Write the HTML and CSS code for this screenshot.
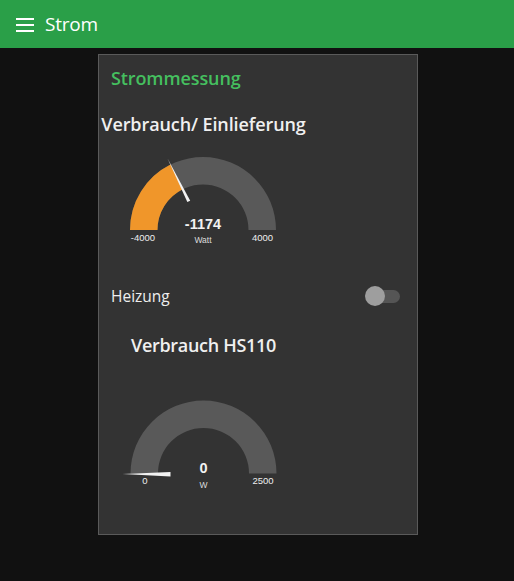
FILE: index.html
```html
<!DOCTYPE html>
<html lang="de">
<head>
<meta charset="utf-8">
<title>Strom</title>
<link rel="stylesheet" href="styles.css">
</head>
<body>
<header class="toolbar">
  <svg class="menu-icon" width="18" height="14" viewBox="0 0 18 14" aria-hidden="true">
    <rect x="0" y="0" width="18" height="2" fill="#fff"/>
    <rect x="0" y="6" width="18" height="2" fill="#fff"/>
    <rect x="0" y="12" width="18" height="2" fill="#fff"/>
  </svg>
  <span class="toolbar-title">Strom</span>
</header>
<main class="content">
  <section class="card">
    <div class="group-title">Strommessung</div>

    <div class="gauge gauge-one">
      <div class="gauge-title">Verbrauch/ Einlieferung</div>
      <svg class="gauge-svg" width="209" height="105" viewBox="0 0 209 105">
        <path d="M31,83 A73,73 0 0 1 177,83 L149.5,83 A45.5,45.5 0 0 0 58.5,83 Z" fill="#595959"/>
        <path d="M31,83 A73,73 0 0 1 71.54,17.61 L83.77,42.25 A45.5,45.5 0 0 0 58.5,83 Z" fill="#f0962a"/>
        <polygon points="68.43,11.34 91.2,53.63 88.34,55.05" fill="#f2f2f2"/>
        <text class="g-value" x="104" y="82">-1174</text>
        <text class="g-unit" x="104" y="96">Watt</text>
        <text class="g-limit" x="44" y="94">-4000</text>
        <text class="g-limit" x="163.5" y="94">4000</text>
      </svg>
    </div>

    <div class="switch-row">
      <span class="switch-label">Heizung</span>
      <span class="switch">
        <span class="switch-track"></span>
        <span class="switch-knob"></span>
      </span>
    </div>

    <div class="gauge gauge-two">
      <div class="gauge-title">Verbrauch HS110</div>
      <svg class="gauge-svg" width="209" height="122" viewBox="0 0 209 122">
        <path d="M31.5,101.5 A73,73 0 0 1 177.5,101.5 L150,101.5 A45.5,45.5 0 0 0 59,101.5 Z" fill="#595959"/>
        <polygon points="23.5,102 71.5,100 71.5,104.5" fill="#f2f2f2"/>
        <text class="g-value" x="104.5" y="101">0</text>
        <text class="g-unit" x="104.5" y="116">W</text>
        <text class="g-limit" x="46" y="112">0</text>
        <text class="g-limit" x="164" y="112">2500</text>
      </svg>
    </div>
  </section>
</main>
</body>
</html>
```

FILE: styles.css
```css
* { box-sizing: border-box; }

html, body {
  margin: 0;
  padding: 0;
  background: #111111;
  font-family: "Open Sans", "Noto Sans", sans-serif;
  color: #eeeeee;
}

.toolbar {
  height: 48px;
  background: #2a9f48;
  display: flex;
  align-items: center;
  padding-left: 16px;
}

.menu-icon {
  display: block;
  margin-top: 2px;
}

.toolbar-title {
  margin-left: 11px;
  font-size: 19px;
  color: #ffffff;
  letter-spacing: -0.2px;
}

.content {
  display: flex;
  justify-content: center;
  padding-top: 6px;
  padding-left: 2px;
}

.card {
  width: 320px;
  height: 481px;
  background: #333333;
  border: 1px solid #5a5a5a;
  display: flex;
  flex-direction: column;
}

.group-title {
  height: 46px;
  line-height: 46px;
  padding-left: 12px;
  font-size: 18px;
  font-weight: 600;
  color: #45bf5f;
  letter-spacing: -0.1px;
}

.gauge {
  width: 209px;
  display: flex;
  flex-direction: column;
  align-items: center;
}

.gauge-title {
  font-size: 18px;
  font-weight: 600;
  color: #f0f0f0;
  white-space: nowrap;
  letter-spacing: -0.1px;
}

.gauge-one .gauge-title {
  height: 46px;
  line-height: 46px;
}

.gauge-two .gauge-title {
  height: 54px;
  line-height: 54px;
  letter-spacing: -0.3px;
}

.gauge-svg {
  display: block;
}

.g-value {
  font-family: "Liberation Sans", Arial, sans-serif;
  font-weight: bold;
  font-size: 14.5px;
  fill: #f2f2f2;
  text-anchor: middle;
}

.g-unit {
  font-family: "Liberation Sans", Arial, sans-serif;
  font-size: 8.5px;
  fill: #dddddd;
  text-anchor: middle;
}

.g-limit {
  font-family: "Liberation Sans", Arial, sans-serif;
  font-size: 9.5px;
  fill: #eeeeee;
  text-anchor: middle;
}

.switch-row {
  margin-top: 22px;
  height: 44px;
  display: flex;
  align-items: center;
  justify-content: space-between;
  padding: 0 17px 0 12px;
}

.switch-label {
  font-size: 15.5px;
  color: #eeeeee;
}

.switch {
  position: relative;
  width: 35px;
  height: 20px;
  display: block;
}

.switch-track {
  position: absolute;
  left: 3px;
  right: 0;
  top: 3.5px;
  height: 13px;
  border-radius: 7px;
  background: #555555;
}

.switch-knob {
  position: absolute;
  left: 0;
  top: 0;
  width: 20px;
  height: 20px;
  border-radius: 50%;
  background: #9e9e9e;
}
```
